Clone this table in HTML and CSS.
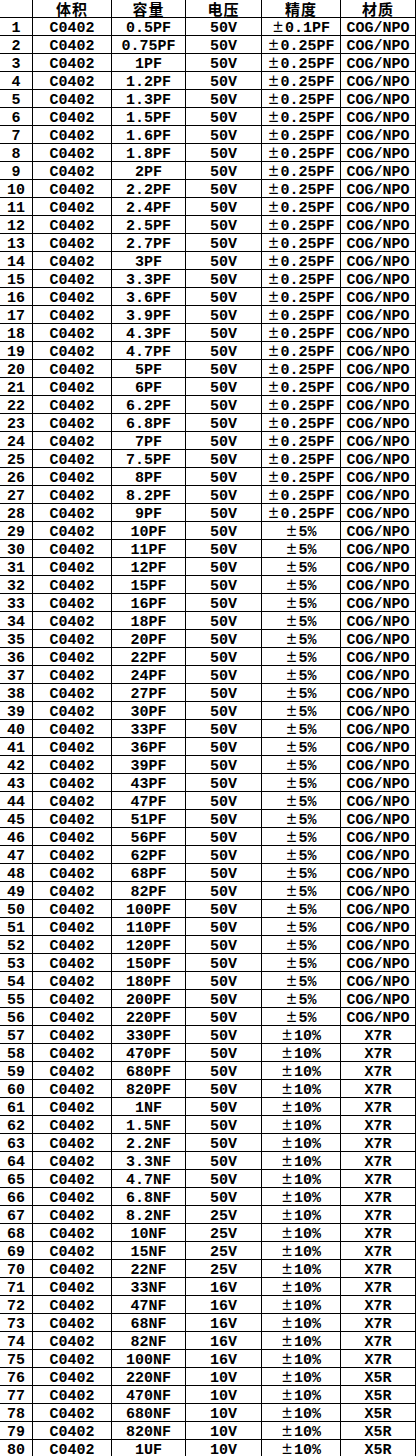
FILE: index.html
```html
<!DOCTYPE html>
<html lang="zh-CN">
<head>
<meta charset="utf-8">
<title>C0402 电容规格表</title>
<link rel="stylesheet" href="styles.css">
</head>
<body>
<table class="spec">
<colgroup>
<col class="c-no"><col class="c-size"><col class="c-cap"><col class="c-volt"><col class="c-tol"><col class="c-mat">
</colgroup>
<thead>
<tr><th></th><th>体积</th><th>容量</th><th>电压</th><th>精度</th><th>材质</th></tr>
</thead>
<tbody>
<tr><td>1</td><td>C0402</td><td>0.5PF</td><td>50V</td><td><span class="pm">±</span>0.1PF</td><td>COG/NPO</td></tr>
<tr><td>2</td><td>C0402</td><td>0.75PF</td><td>50V</td><td><span class="pm">±</span>0.25PF</td><td>COG/NPO</td></tr>
<tr><td>3</td><td>C0402</td><td>1PF</td><td>50V</td><td><span class="pm">±</span>0.25PF</td><td>COG/NPO</td></tr>
<tr><td>4</td><td>C0402</td><td>1.2PF</td><td>50V</td><td><span class="pm">±</span>0.25PF</td><td>COG/NPO</td></tr>
<tr><td>5</td><td>C0402</td><td>1.3PF</td><td>50V</td><td><span class="pm">±</span>0.25PF</td><td>COG/NPO</td></tr>
<tr><td>6</td><td>C0402</td><td>1.5PF</td><td>50V</td><td><span class="pm">±</span>0.25PF</td><td>COG/NPO</td></tr>
<tr><td>7</td><td>C0402</td><td>1.6PF</td><td>50V</td><td><span class="pm">±</span>0.25PF</td><td>COG/NPO</td></tr>
<tr><td>8</td><td>C0402</td><td>1.8PF</td><td>50V</td><td><span class="pm">±</span>0.25PF</td><td>COG/NPO</td></tr>
<tr><td>9</td><td>C0402</td><td>2PF</td><td>50V</td><td><span class="pm">±</span>0.25PF</td><td>COG/NPO</td></tr>
<tr><td>10</td><td>C0402</td><td>2.2PF</td><td>50V</td><td><span class="pm">±</span>0.25PF</td><td>COG/NPO</td></tr>
<tr><td>11</td><td>C0402</td><td>2.4PF</td><td>50V</td><td><span class="pm">±</span>0.25PF</td><td>COG/NPO</td></tr>
<tr><td>12</td><td>C0402</td><td>2.5PF</td><td>50V</td><td><span class="pm">±</span>0.25PF</td><td>COG/NPO</td></tr>
<tr><td>13</td><td>C0402</td><td>2.7PF</td><td>50V</td><td><span class="pm">±</span>0.25PF</td><td>COG/NPO</td></tr>
<tr><td>14</td><td>C0402</td><td>3PF</td><td>50V</td><td><span class="pm">±</span>0.25PF</td><td>COG/NPO</td></tr>
<tr><td>15</td><td>C0402</td><td>3.3PF</td><td>50V</td><td><span class="pm">±</span>0.25PF</td><td>COG/NPO</td></tr>
<tr><td>16</td><td>C0402</td><td>3.6PF</td><td>50V</td><td><span class="pm">±</span>0.25PF</td><td>COG/NPO</td></tr>
<tr><td>17</td><td>C0402</td><td>3.9PF</td><td>50V</td><td><span class="pm">±</span>0.25PF</td><td>COG/NPO</td></tr>
<tr><td>18</td><td>C0402</td><td>4.3PF</td><td>50V</td><td><span class="pm">±</span>0.25PF</td><td>COG/NPO</td></tr>
<tr><td>19</td><td>C0402</td><td>4.7PF</td><td>50V</td><td><span class="pm">±</span>0.25PF</td><td>COG/NPO</td></tr>
<tr><td>20</td><td>C0402</td><td>5PF</td><td>50V</td><td><span class="pm">±</span>0.25PF</td><td>COG/NPO</td></tr>
<tr><td>21</td><td>C0402</td><td>6PF</td><td>50V</td><td><span class="pm">±</span>0.25PF</td><td>COG/NPO</td></tr>
<tr><td>22</td><td>C0402</td><td>6.2PF</td><td>50V</td><td><span class="pm">±</span>0.25PF</td><td>COG/NPO</td></tr>
<tr><td>23</td><td>C0402</td><td>6.8PF</td><td>50V</td><td><span class="pm">±</span>0.25PF</td><td>COG/NPO</td></tr>
<tr><td>24</td><td>C0402</td><td>7PF</td><td>50V</td><td><span class="pm">±</span>0.25PF</td><td>COG/NPO</td></tr>
<tr><td>25</td><td>C0402</td><td>7.5PF</td><td>50V</td><td><span class="pm">±</span>0.25PF</td><td>COG/NPO</td></tr>
<tr><td>26</td><td>C0402</td><td>8PF</td><td>50V</td><td><span class="pm">±</span>0.25PF</td><td>COG/NPO</td></tr>
<tr><td>27</td><td>C0402</td><td>8.2PF</td><td>50V</td><td><span class="pm">±</span>0.25PF</td><td>COG/NPO</td></tr>
<tr><td>28</td><td>C0402</td><td>9PF</td><td>50V</td><td><span class="pm">±</span>0.25PF</td><td>COG/NPO</td></tr>
<tr><td>29</td><td>C0402</td><td>10PF</td><td>50V</td><td><span class="pm">±</span>5%</td><td>COG/NPO</td></tr>
<tr><td>30</td><td>C0402</td><td>11PF</td><td>50V</td><td><span class="pm">±</span>5%</td><td>COG/NPO</td></tr>
<tr><td>31</td><td>C0402</td><td>12PF</td><td>50V</td><td><span class="pm">±</span>5%</td><td>COG/NPO</td></tr>
<tr><td>32</td><td>C0402</td><td>15PF</td><td>50V</td><td><span class="pm">±</span>5%</td><td>COG/NPO</td></tr>
<tr><td>33</td><td>C0402</td><td>16PF</td><td>50V</td><td><span class="pm">±</span>5%</td><td>COG/NPO</td></tr>
<tr><td>34</td><td>C0402</td><td>18PF</td><td>50V</td><td><span class="pm">±</span>5%</td><td>COG/NPO</td></tr>
<tr><td>35</td><td>C0402</td><td>20PF</td><td>50V</td><td><span class="pm">±</span>5%</td><td>COG/NPO</td></tr>
<tr><td>36</td><td>C0402</td><td>22PF</td><td>50V</td><td><span class="pm">±</span>5%</td><td>COG/NPO</td></tr>
<tr><td>37</td><td>C0402</td><td>24PF</td><td>50V</td><td><span class="pm">±</span>5%</td><td>COG/NPO</td></tr>
<tr><td>38</td><td>C0402</td><td>27PF</td><td>50V</td><td><span class="pm">±</span>5%</td><td>COG/NPO</td></tr>
<tr><td>39</td><td>C0402</td><td>30PF</td><td>50V</td><td><span class="pm">±</span>5%</td><td>COG/NPO</td></tr>
<tr><td>40</td><td>C0402</td><td>33PF</td><td>50V</td><td><span class="pm">±</span>5%</td><td>COG/NPO</td></tr>
<tr><td>41</td><td>C0402</td><td>36PF</td><td>50V</td><td><span class="pm">±</span>5%</td><td>COG/NPO</td></tr>
<tr><td>42</td><td>C0402</td><td>39PF</td><td>50V</td><td><span class="pm">±</span>5%</td><td>COG/NPO</td></tr>
<tr><td>43</td><td>C0402</td><td>43PF</td><td>50V</td><td><span class="pm">±</span>5%</td><td>COG/NPO</td></tr>
<tr><td>44</td><td>C0402</td><td>47PF</td><td>50V</td><td><span class="pm">±</span>5%</td><td>COG/NPO</td></tr>
<tr><td>45</td><td>C0402</td><td>51PF</td><td>50V</td><td><span class="pm">±</span>5%</td><td>COG/NPO</td></tr>
<tr><td>46</td><td>C0402</td><td>56PF</td><td>50V</td><td><span class="pm">±</span>5%</td><td>COG/NPO</td></tr>
<tr><td>47</td><td>C0402</td><td>62PF</td><td>50V</td><td><span class="pm">±</span>5%</td><td>COG/NPO</td></tr>
<tr><td>48</td><td>C0402</td><td>68PF</td><td>50V</td><td><span class="pm">±</span>5%</td><td>COG/NPO</td></tr>
<tr><td>49</td><td>C0402</td><td>82PF</td><td>50V</td><td><span class="pm">±</span>5%</td><td>COG/NPO</td></tr>
<tr><td>50</td><td>C0402</td><td>100PF</td><td>50V</td><td><span class="pm">±</span>5%</td><td>COG/NPO</td></tr>
<tr><td>51</td><td>C0402</td><td>110PF</td><td>50V</td><td><span class="pm">±</span>5%</td><td>COG/NPO</td></tr>
<tr><td>52</td><td>C0402</td><td>120PF</td><td>50V</td><td><span class="pm">±</span>5%</td><td>COG/NPO</td></tr>
<tr><td>53</td><td>C0402</td><td>150PF</td><td>50V</td><td><span class="pm">±</span>5%</td><td>COG/NPO</td></tr>
<tr><td>54</td><td>C0402</td><td>180PF</td><td>50V</td><td><span class="pm">±</span>5%</td><td>COG/NPO</td></tr>
<tr><td>55</td><td>C0402</td><td>200PF</td><td>50V</td><td><span class="pm">±</span>5%</td><td>COG/NPO</td></tr>
<tr><td>56</td><td>C0402</td><td>220PF</td><td>50V</td><td><span class="pm">±</span>5%</td><td>COG/NPO</td></tr>
<tr><td>57</td><td>C0402</td><td>330PF</td><td>50V</td><td><span class="pm">±</span>10%</td><td>X7R</td></tr>
<tr><td>58</td><td>C0402</td><td>470PF</td><td>50V</td><td><span class="pm">±</span>10%</td><td>X7R</td></tr>
<tr><td>59</td><td>C0402</td><td>680PF</td><td>50V</td><td><span class="pm">±</span>10%</td><td>X7R</td></tr>
<tr><td>60</td><td>C0402</td><td>820PF</td><td>50V</td><td><span class="pm">±</span>10%</td><td>X7R</td></tr>
<tr><td>61</td><td>C0402</td><td>1NF</td><td>50V</td><td><span class="pm">±</span>10%</td><td>X7R</td></tr>
<tr><td>62</td><td>C0402</td><td>1.5NF</td><td>50V</td><td><span class="pm">±</span>10%</td><td>X7R</td></tr>
<tr><td>63</td><td>C0402</td><td>2.2NF</td><td>50V</td><td><span class="pm">±</span>10%</td><td>X7R</td></tr>
<tr><td>64</td><td>C0402</td><td>3.3NF</td><td>50V</td><td><span class="pm">±</span>10%</td><td>X7R</td></tr>
<tr><td>65</td><td>C0402</td><td>4.7NF</td><td>50V</td><td><span class="pm">±</span>10%</td><td>X7R</td></tr>
<tr><td>66</td><td>C0402</td><td>6.8NF</td><td>50V</td><td><span class="pm">±</span>10%</td><td>X7R</td></tr>
<tr><td>67</td><td>C0402</td><td>8.2NF</td><td>25V</td><td><span class="pm">±</span>10%</td><td>X7R</td></tr>
<tr><td>68</td><td>C0402</td><td>10NF</td><td>25V</td><td><span class="pm">±</span>10%</td><td>X7R</td></tr>
<tr><td>69</td><td>C0402</td><td>15NF</td><td>25V</td><td><span class="pm">±</span>10%</td><td>X7R</td></tr>
<tr><td>70</td><td>C0402</td><td>22NF</td><td>25V</td><td><span class="pm">±</span>10%</td><td>X7R</td></tr>
<tr><td>71</td><td>C0402</td><td>33NF</td><td>16V</td><td><span class="pm">±</span>10%</td><td>X7R</td></tr>
<tr><td>72</td><td>C0402</td><td>47NF</td><td>16V</td><td><span class="pm">±</span>10%</td><td>X7R</td></tr>
<tr><td>73</td><td>C0402</td><td>68NF</td><td>16V</td><td><span class="pm">±</span>10%</td><td>X7R</td></tr>
<tr><td>74</td><td>C0402</td><td>82NF</td><td>16V</td><td><span class="pm">±</span>10%</td><td>X7R</td></tr>
<tr><td>75</td><td>C0402</td><td>100NF</td><td>16V</td><td><span class="pm">±</span>10%</td><td>X7R</td></tr>
<tr><td>76</td><td>C0402</td><td>220NF</td><td>10V</td><td><span class="pm">±</span>10%</td><td>X5R</td></tr>
<tr><td>77</td><td>C0402</td><td>470NF</td><td>10V</td><td><span class="pm">±</span>10%</td><td>X5R</td></tr>
<tr><td>78</td><td>C0402</td><td>680NF</td><td>10V</td><td><span class="pm">±</span>10%</td><td>X5R</td></tr>
<tr><td>79</td><td>C0402</td><td>820NF</td><td>10V</td><td><span class="pm">±</span>10%</td><td>X5R</td></tr>
<tr><td>80</td><td>C0402</td><td>1UF</td><td>10V</td><td><span class="pm">±</span>10%</td><td>X5R</td></tr>
</tbody>
</table>
</body>
</html>
```

FILE: styles.css
```css
html, body {
  margin: 0;
  padding: 0;
  background: #fff;
}

/* grid lines come from the table background showing through the 1px cell spacing;
   the outer left/top rule lies just outside the frame, as in the source sheet */
.spec {
  width: 417px;
  margin: -1px 0 0 -1px;
  table-layout: fixed;
  border-collapse: separate;
  border-spacing: 1px;
  background: #000;
  color: #000;
  font-family: "Liberation Mono", "Noto Sans CJK SC", monospace;
  font-size: 15px;
  font-weight: bold;
}

.c-no { width: 32px; }
.c-size { width: 78px; }
.c-cap { width: 73px; }
.c-volt { width: 75px; }
.c-tol { width: 78px; }
.c-mat { width: 74px; }

.spec th,
.spec td {
  box-sizing: border-box;
  height: 17px;
  padding: 5px 0 0;
  line-height: 12px;
  vertical-align: top;
  text-align: center;
  white-space: nowrap;
  background: #fff;
}

.spec th {
  padding: 3px 0 0;
  line-height: 12px;
  font-family: "Noto Sans CJK SC", sans-serif;
  font-size: 15px;
  font-weight: 700;
  letter-spacing: 1px;
}

.pm {
  margin-right: 1px;
  font-family: "Noto Sans CJK SC", sans-serif;
  font-weight: 700;
  font-size: 12px;
  line-height: 6px;
}
```
